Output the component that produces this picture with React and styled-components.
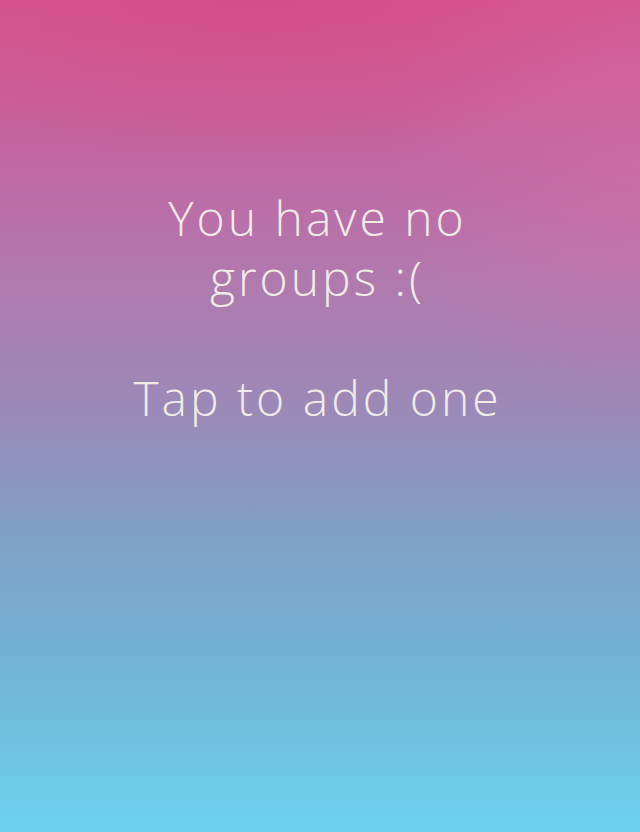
import React from 'react';
import styled, { createGlobalStyle } from 'styled-components';

const GlobalStyle = createGlobalStyle`
  html, body {
    margin: 0;
    padding: 0;
    height: 100%;
  }
  #root {
    height: 100%;
  }
`;

const Screen = styled.div`
  height: 832px;
  width: 640px;
  box-sizing: border-box;
  display: flex;
  justify-content: center;
  align-items: flex-start;
  padding-top: 188px;
  padding-right: 5px;
  background:
    radial-gradient(ellipse 60% 20% at 40% 0%, rgba(212, 76, 134, 0.6), transparent),
    radial-gradient(ellipse 40% 30% at 100% 20%, rgba(214, 110, 170, 0.5), transparent),
    linear-gradient(180deg, #d6548e 0%, #c265a2 18%, #b07aae 34%, #9a8ab8 50%, #80a0c6 64%, #72b4d6 80%, #6cd2ee 100%);
  cursor: pointer;
`;

const Message = styled.div`
  width: 440px;
  font-family: "Open Sans", Lato, sans-serif;
  font-weight: 300;
  font-size: 48px;
  line-height: 60px;
  letter-spacing: 3px;
  color: #f1ebe8;
  text-align: center;
  white-space: pre-line;
`;

export default function App() {
  return (
    <>
      <GlobalStyle />
      <Screen>
        <Message>{'You have no\ngroups :(\n\nTap to add one'}</Message>
      </Screen>
    </>
  );
}
